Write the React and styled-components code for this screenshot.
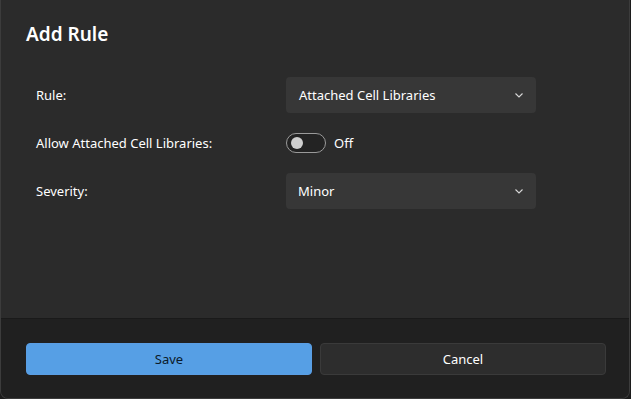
import styled, { createGlobalStyle } from 'styled-components';

const GlobalStyle = createGlobalStyle`
  html, body {
    margin: 0;
    padding: 0;
    background: #1c1c1c;
  }
  body {
    font-family: "Noto Sans", "Segoe UI", sans-serif;
  }
`;

const Dialog = styled.div`
  box-sizing: border-box;
  width: 630px;
  height: 399px;
  display: flex;
  flex-direction: column;
  background: #2b2b2b;
  border: 1px solid #3c3c3c;
  border-top: none;
  border-radius: 0 0 8px 8px;
  overflow: hidden;
  color: #ffffff;
`;

const Body = styled.div`
  flex: 1;
  padding: 20px 25px 0 25px;
`;

const Title = styled.h1`
  margin: 0;
  font-size: 19px;
  font-weight: 600;
  line-height: 29px;
`;

const Form = styled.div`
  display: grid;
  grid-template-columns: 250px 250px;
  grid-auto-rows: 36px;
  row-gap: 12px;
  margin-top: 28px;
  padding-left: 10px;
  align-items: center;
`;

const Label = styled.div`
  font-size: 13px;
  color: #ffffff;
`;

const Select = styled.div`
  box-sizing: border-box;
  height: 36px;
  display: flex;
  align-items: center;
  justify-content: space-between;
  padding: 0 13px 0 ${(p) => p.$pad || 12}px;
  background: #373737;
  border-radius: 4px;
  font-size: 13px;
`;

const ToggleRow = styled.div`
  display: flex;
  align-items: center;
  gap: 8px;
  font-size: 13px;
`;

const Track = styled.div`
  box-sizing: border-box;
  width: 40px;
  height: 20px;
  border: 1px solid #9a9a9a;
  border-radius: 10px;
  background: #232323;
  display: flex;
  align-items: center;
  padding-left: 4px;
`;

const Knob = styled.div`
  width: 12px;
  height: 12px;
  border-radius: 50%;
  background: #cfcfcf;
`;

const Footer = styled.div`
  height: 80px;
  box-sizing: border-box;
  background: #202020;
  border-top: 1px solid #1a1a1a;
  display: grid;
  grid-template-columns: 1fr 1fr;
  gap: 8px;
  padding: 24px 23px 0 25px;
`;

const Button = styled.button`
  box-sizing: border-box;
  height: 32px;
  border-radius: 4px;
  font-family: inherit;
  font-size: 13px;
  border: 1px solid ${(p) => (p.$primary ? '#5a9ee4' : '#3a3a3a')};
  background: ${(p) => (p.$primary ? '#569fe5' : '#2d2d2d')};
  color: ${(p) => (p.$primary ? '#0b1a2a' : '#ffffff')};
`;

const Chevron = () => (
  <svg width="8" height="5" viewBox="0 0 8 5" fill="none">
    <path d="M0.5 0.5l3.5 3.5 3.5-3.5" stroke="#d8d8d8" strokeWidth="1.1" />
  </svg>
);

export default function App() {
  return (
    <>
      <GlobalStyle />
      <Dialog>
        <Body>
          <Title>Add Rule</Title>
          <Form>
            <Label>Rule:</Label>
            <Select $pad={13}>
              <span>Attached Cell Libraries</span>
              <Chevron />
            </Select>
            <Label>Allow Attached Cell Libraries:</Label>
            <ToggleRow>
              <Track>
                <Knob />
              </Track>
              <span>Off</span>
            </ToggleRow>
            <Label>Severity:</Label>
            <Select>
              <span>Minor</span>
              <Chevron />
            </Select>
          </Form>
        </Body>
        <Footer>
          <Button $primary>Save</Button>
          <Button>Cancel</Button>
        </Footer>
      </Dialog>
    </>
  );
}
